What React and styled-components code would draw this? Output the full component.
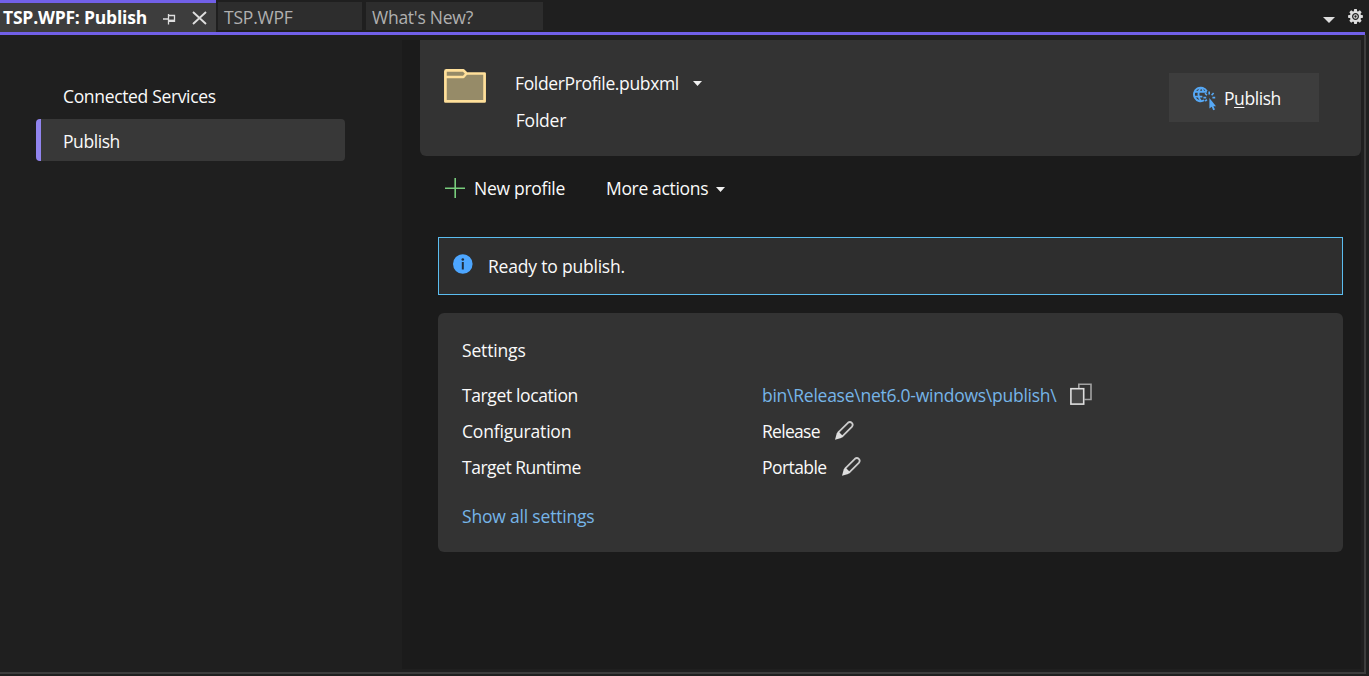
import React from "react";
import styled, { createGlobalStyle } from "styled-components";

const GlobalStyle = createGlobalStyle`
  * { box-sizing: border-box; }
  body { margin: 0; background: #1f1f1f; overflow: hidden; }
  svg { display: block; flex: none; }
`;

const Window = styled.div`
  width: 1369px;
  height: 676px;
  display: flex;
  flex-direction: column;
  background: #1f1f1f;
  color: #fafafa;
  font: 17.5px/24px "Open Sans", "Noto Sans", sans-serif;
`;

const TabBar = styled.header`
  display: flex;
  height: 32px;
  flex: none;
`;

const Tab = styled.div`
  width: ${(p) => p.$width}px;
  height: 28px;
  margin: 2px 0 0 ${(p) => p.$gap}px;
  padding: 3px 0 0 6px;
  background: #2d2d2d;
  color: #b0b0b0;
`;

const ActiveTab = styled.div`
  display: flex;
  width: 216px;
  height: 32px;
  padding: 2px 0 0 3px;
  border-top: 3px solid #7160e8;
  background: #3d3d3d;
  color: #ffffff;
  font-weight: bold;
`;

const TabIcons = styled.div`
  display: flex;
  gap: 16px;
  padding-top: 6px;
  margin-left: auto;
  padding-right: 9px;
`;

const BarTools = styled.div`
  display: flex;
  align-items: flex-start;
  gap: 13px;
  margin-left: auto;
  padding: 9px 6px 0 0;
`;

const ToolCaret = styled.div`
  padding-top: 8px;
`;

const AccentLine = styled.div`
  flex: none;
  width: 1365px;
  height: 3px;
  background: #7160e8;
`;

const Frame = styled.div`
  display: flex;
  flex: none;
  width: 1366px;
  height: 639px;
  padding: 5px 3px 3px 0;
  border: solid #3d3d3d;
  border-width: 0 2px 2px 0;
`;

const Sidebar = styled.nav`
  width: 402px;
  padding: 34px 57px 0 36px;
`;

const NavItem = styled.div`
  height: ${(p) => (p.$selected ? 42 : 45)}px;
  padding: ${(p) => (p.$selected ? "10px 0 0 22px" : "10px 0 0 27px")};
  border-left: ${(p) => (p.$selected ? "5px solid #9184ee" : "0")};
  border-radius: 4px;
  background: ${(p) => (p.$selected ? "#383838" : "transparent")};
`;

const Main = styled.main`
  flex: 1;
  padding-left: 18px;
  background: #1b1b1b;
`;

const ProfileHeader = styled.section`
  display: flex;
  height: 116px;
  padding: 29px 42px 0 24px;
  border-radius: 0 0 6px 6px;
  background: #333333;
`;

const ProfileInfo = styled.div`
  padding: 2px 0 0 29px;
`;

const ProfileName = styled.div`
  display: flex;
  align-items: center;
  gap: 14px;
  height: 24px;
`;

const ProfileKind = styled.div`
  padding: 13px 0 0 0.8px;
`;

const PublishButton = styled.button`
  display: flex;
  width: 150px;
  height: 49px;
  margin: 4px 0 0 auto;
  padding: 13px 0 0 24px;
  gap: 8px;
  border: 0;
  background: #3d3d3d;
  color: #fafafa;
  font: inherit;
  text-align: left;
`;

const Mnemonic = styled.span`
  text-decoration: underline;
  text-decoration-thickness: 1px;
  text-underline-offset: 2px;
`;

const Actions = styled.div`
  display: flex;
  height: 81px;
  padding: 20px 0 0 25px;
`;

const Action = styled.div`
  display: flex;
  align-items: center;
  height: 24px;
  gap: ${(p) => p.$gap}px;
  margin-right: 41px;
`;

const ActionCaret = styled.span`
  padding-top: 2px;
`;

const Notice = styled.section`
  display: flex;
  width: 905px;
  height: 58px;
  margin-left: 18px;
  padding: 16px 0 0 14px;
  gap: 15px;
  border: 1px solid #5bbdf0;
  background: #2e2e2e;
`;

const SettingsCard = styled.section`
  width: 905px;
  height: 239px;
  margin: 18px 0 0 18px;
  padding: 25px 24px 0;
  border-radius: 6px;
  background: #333333;
`;

const SettingsRows = styled.div`
  display: grid;
  grid-template-columns: 300px 1fr;
  grid-auto-rows: 36px;
  margin: 21px 0 13px;
`;

const Value = styled.div`
  display: flex;
  gap: ${(p) => p.$gap}px;
`;

const EditButton = styled.span`
  padding-top: 2px;
`;

const Text = styled.span`
  letter-spacing: ${(p) => p.$track || 0}px;
  white-space: pre;
`;

const Link = styled(Text)`
  color: #76b5e8;
`;

const Caret = ({ width = 9, height = 5, fill = "#f0f0f0" }) => (
  <svg width={width} height={height} viewBox="0 0 10 5" preserveAspectRatio="none">
    <path d="M0 0H10L5 5Z" fill={fill} />
  </svg>
);

const PinIcon = () => (
  <svg width="13" height="14" viewBox="0 0 13 14">
    <g fill="none" stroke="#dedede" strokeWidth="1.3">
      <path d="M0 8H5M5.5 3V13.5" />
      <path d="M5.5 4.5H11.5V10.4H5.5" />
    </g>
    <path d="M5 8.6H12V11H5Z" fill="#dedede" />
  </svg>
);

const CloseIcon = () => (
  <svg width="15" height="14" viewBox="0 0 15 14">
    <path d="M1 1L14 13M14 1L1 13" stroke="#dedede" strokeWidth="1.9" fill="none" />
  </svg>
);

const GearIcon = () => (
  <svg width="15" height="15" viewBox="-7.5 -7.5 15 15">
    {[0, 45, 90, 135].map((a) => (
      <path key={a} d="M-1.3 -7.4H1.3L1.8 -4.5H-1.8ZM-1.3 7.4H1.3L1.8 4.5H-1.8Z" fill="#dedede" transform={`rotate(${a})`} />
    ))}
    <circle r="4.5" fill="none" stroke="#dedede" strokeWidth="2.1" />
    <circle r="1.7" fill="none" stroke="#dedede" strokeWidth="1.1" />
  </svg>
);

const FolderIcon = () => (
  <svg width="42" height="35" viewBox="0 0 42 35">
    <path d="M1.4 2.4Q1.4 1.4 2.4 1.4H19.5L22.5 4.5H40.6V32.4H1.4Z" fill="#968b68" stroke="#ffe09a" strokeWidth="2.7" strokeLinejoin="round" />
    <path d="M1.5 8H19.5L22.5 4.5" fill="none" stroke="#ffe09a" strokeWidth="2.4" strokeLinejoin="round" />
  </svg>
);

const GlobeClickIcon = () => (
  <svg width="23" height="25" viewBox="0 0 23 25">
    <g fill="none" stroke="#56a8f5" strokeWidth="1.9">
      <path d="M11.2 14.3A6.8 6.8 0 1 1 13.8 5.2" />
      <path d="M8 1.4C4.6 5 4.6 11.4 8 15M8 1.4C9.8 3 10.5 4.8 10.6 6.4M1.4 5.8H13.8M1.4 10.6H9.4" />
      <path d="M16.2 8.6V5.4M13.9 9.3L12 7.2M18.6 9.3L20.6 7M13.2 11.6H10.4M19.4 11.6H22.2M13.9 13.6L12.2 15.2" strokeWidth="1.6" />
    </g>
    <path d="M16.4 12V22.6L18.7 20.7L20.2 24.2L22 23.4L20.4 20.2H23Z" fill="#56a8f5" />
  </svg>
);

const PlusIcon = () => (
  <svg width="20" height="20" viewBox="0 0 20 20">
    <path d="M10.2 0V20M0 10.2H20" stroke="#78cd7c" strokeWidth="1.6" />
  </svg>
);

const InfoIcon = () => (
  <svg width="20" height="20" viewBox="0 0 20 20">
    <circle cx="9.8" cy="10" r="9.8" fill="#4da6ff" />
    <circle cx="9.8" cy="5.5" r="1.3" fill="#1f2d3d" />
    <path d="M9.8 8V15.5" stroke="#1f2d3d" strokeWidth="2" />
  </svg>
);

const CopyIcon = () => (
  <svg width="22" height="22" viewBox="0 0 22 22">
    <path d="M8.8 5V1.2H21V16.5H14.5" fill="none" stroke="#a2a2a2" strokeWidth="1.6" />
    <rect x="0.9" y="5.7" width="12.8" height="15.4" fill="#454545" stroke="#dedede" strokeWidth="1.6" />
  </svg>
);

const PencilIcon = () => (
  <svg width="19" height="19" viewBox="0 0 19 19">
    <path d="M2.8 11.8L12.9 1.8Q15 0.1 16.8 1.9Q18.6 3.8 16.8 5.9L6.8 15.9" fill="none" stroke="#cccccc" strokeWidth="1.8" />
    <path d="M3.4 10.4L8.2 15.2L6.2 17L0 18.8L1.7 12.6Z" fill="#dedede" />
  </svg>
);

export default function App() {
  return (
    <Window>
      <GlobalStyle />
      <TabBar>
        <ActiveTab>
          <Text $track={-0.2}>TSP.WPF: Publish</Text>
          <TabIcons>
            <PinIcon />
            <CloseIcon />
          </TabIcons>
        </ActiveTab>
        <Tab $width={144} $gap={2}><Text $track={-0.2}>TSP.WPF</Text></Tab>
        <Tab $width={177} $gap={4}><Text $track={-0.25}>What's New?</Text></Tab>
        <BarTools>
          <ToolCaret><Caret width={12} height={6} fill="#dedede" /></ToolCaret>
          <GearIcon />
        </BarTools>
      </TabBar>
      <AccentLine />
      <Frame>
        <Sidebar>
          <NavItem><Text $track={-0.34}>Connected Services</Text></NavItem>
          <NavItem $selected><Text $track={-0.42}>Publish</Text></NavItem>
        </Sidebar>
        <Main>
          <ProfileHeader>
            <FolderIcon />
            <ProfileInfo>
              <ProfileName>
                <Text $track={-0.35}>FolderProfile.pubxml</Text>
                <Caret />
              </ProfileName>
              <ProfileKind><Text $track={-0.22}>Folder</Text></ProfileKind>
            </ProfileInfo>
            <PublishButton>
              <GlobeClickIcon />
              <Text $track={-0.42}>P<Mnemonic>u</Mnemonic>blish</Text>
            </PublishButton>
          </ProfileHeader>
          <Actions>
            <Action $gap={9}><PlusIcon /><Text $track={-0.28}>New profile</Text></Action>
            <Action $gap={8}>
              <Text $track={-0.33}>More actions</Text>
              <ActionCaret><Caret /></ActionCaret>
            </Action>
          </Actions>
          <Notice>
            <InfoIcon />
            <Text $track={-0.2}>Ready to publish.</Text>
          </Notice>
          <SettingsCard>
            <Text $track={-0.16}>Settings</Text>
            <SettingsRows>
              <Text $track={-0.38}>Target location</Text>
              <Value $gap={14}><Link $track={-0.25}>bin\Release\net6.0-windows\publish\</Link><CopyIcon /></Value>
              <Text $track={-0.18}>Configuration</Text>
              <Value $gap={15}>
                <Text $track={-0.7}>Release</Text>
                <EditButton><PencilIcon /></EditButton>
              </Value>
              <Text $track={-0.48}>Target Runtime</Text>
              <Value $gap={15}>
                <Text $track={-0.57}>Portable</Text>
                <EditButton><PencilIcon /></EditButton>
              </Value>
            </SettingsRows>
            <Link $track={-0.19}>Show all settings</Link>
          </SettingsCard>
        </Main>
      </Frame>
    </Window>
  );
}
